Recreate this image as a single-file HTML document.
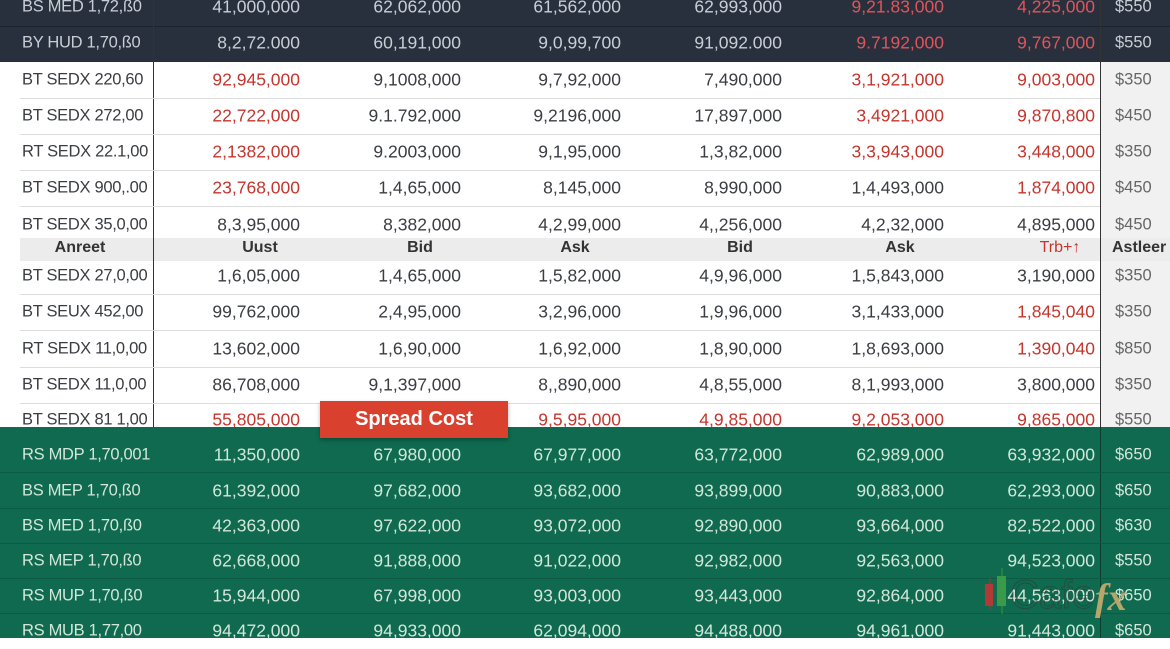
<!DOCTYPE html>
<html><head><meta charset="utf-8"><style>
*{margin:0;padding:0;box-sizing:border-box}
body{width:1170px;height:638px;overflow:hidden;background:#fff;font-family:"Liberation Sans",sans-serif;position:relative}
.band{position:absolute;left:0;width:1170px}
.r{position:absolute;left:0;width:1170px;height:36px;font-size:17.5px;color:#3a3d42}
.r span{position:absolute;top:50%;transform:translateY(-50%);white-space:nowrap;text-align:right}
.r .l{left:22px;width:126px;text-align:left;font-size:16.5px;letter-spacing:-0.3px}
.r .c1{right:870px}.r .c2{right:709px}.r .c3{right:549px}.r .c4{right:388px}.r .c5{right:226px}.r .c6{right:75px}
.r .c7{left:1115px;text-align:left;font-size:16.5px;color:#666}
.red{color:#c5352d!important}
.line{position:absolute;left:20px;width:1080px;height:1px;background:#dcdcdc}
.dk .r, .dk .r .c7{color:#c9ced6}.dk .red{color:#e2545a!important}
.gr{color:#d2e6da!important}
</style></head><body>
<div class="band" style="top:0;height:62px;background:#27303c"></div>
<div class="band" style="top:26px;height:1px;background:#1c232d"></div>
<div style="position:absolute;left:1100px;top:62px;width:70px;height:365px;background:#f1f1f1"></div>
<div style="position:absolute;left:20px;top:238px;width:1150px;height:23px;background:#ececec"></div>
<div style="position:absolute;left:153px;top:0;width:1px;height:427px;background:#333"></div>
<div style="position:absolute;left:1100px;top:0;width:1px;height:638px;background:#333"></div>

<div class="line" style="top:98px"></div><div class="line" style="top:134px"></div><div class="line" style="top:170px"></div><div class="line" style="top:206px"></div>
<div class="line" style="top:294px"></div><div class="line" style="top:330px"></div><div class="line" style="top:367px"></div><div class="line" style="top:403px"></div>

<div class="dk">
<div class="r" style="top:-11px"><span class="l">BS MED 1,72,ß0</span><span class="c1">41,000,000</span><span class="c2">62,062,000</span><span class="c3">61,562,000</span><span class="c4">62,993,000</span><span class="c5 red">9,21.83,000</span><span class="c6 red">4,225,000</span><span class="c7">$550</span></div>
<div class="r" style="top:25px"><span class="l">BY HUD 1,70,ß0</span><span class="c1">8,2,72.000</span><span class="c2">60,191,000</span><span class="c3">9,0,99,700</span><span class="c4">91,092.000</span><span class="c5 red">9.7192,000</span><span class="c6 red">9,767,000</span><span class="c7">$550</span></div>
</div>

<div class="r" style="top:62px"><span class="l">BT SEDX 220,60</span><span class="c1 red">92,945,000</span><span class="c2">9,1008,000</span><span class="c3">9,7,92,000</span><span class="c4">7,490,000</span><span class="c5 red">3,1,921,000</span><span class="c6 red">9,003,000</span><span class="c7">$350</span></div>
<div class="r" style="top:98px"><span class="l">BT SEDX 272,00</span><span class="c1 red">22,722,000</span><span class="c2">9.1.792,000</span><span class="c3">9,2196,000</span><span class="c4">17,897,000</span><span class="c5 red">3,4921,000</span><span class="c6 red">9,870,800</span><span class="c7">$450</span></div>
<div class="r" style="top:134px"><span class="l">RT SEDX 22.1,00</span><span class="c1 red">2,1382,000</span><span class="c2">9.2003,000</span><span class="c3">9,1,95,000</span><span class="c4">1,3,82,000</span><span class="c5 red">3,3,943,000</span><span class="c6 red">3,448,000</span><span class="c7">$350</span></div>
<div class="r" style="top:170px"><span class="l">BT SEDX 900,.00</span><span class="c1 red">23,768,000</span><span class="c2">1,4,65,000</span><span class="c3">8,145,000</span><span class="c4">8,990,000</span><span class="c5">1,4,493,000</span><span class="c6 red">1,874,000</span><span class="c7">$450</span></div>
<div class="r" style="top:207px"><span class="l">BT SEDX 35,0,00</span><span class="c1">8,3,95,000</span><span class="c2">8,382,000</span><span class="c3">4,2,99,000</span><span class="c4">4,,256,000</span><span class="c5">4,2,32,000</span><span class="c6">4,895,000</span><span class="c7">$450</span></div>
<div class="r" style="top:230px;font-weight:bold;font-size:16px;color:#333"><span style="left:30px;width:100px;text-align:center">Anreet</span><span style="left:210px;width:100px;text-align:center">Uust</span><span style="left:370px;width:100px;text-align:center">Bid</span><span style="left:525px;width:100px;text-align:center">Ask</span><span style="left:690px;width:100px;text-align:center">Bid</span><span style="left:850px;width:100px;text-align:center">Ask</span><span class="red" style="left:1010px;width:100px;text-align:center;font-weight:normal">Trb+↑</span><span style="left:1112px;text-align:left">Astleer</span></div>
<div class="r" style="top:258px"><span class="l">BT SEDX 27,0,00</span><span class="c1">1,6,05,000</span><span class="c2">1,4,65,000</span><span class="c3">1,5,82,000</span><span class="c4">4,9,96,000</span><span class="c5">1,5,843,000</span><span class="c6">3,190,000</span><span class="c7">$350</span></div>
<div class="r" style="top:294px"><span class="l">BT SEUX 452,00</span><span class="c1">99,762,000</span><span class="c2">2,4,95,000</span><span class="c3">3,2,96,000</span><span class="c4">1,9,96,000</span><span class="c5">3,1,433,000</span><span class="c6 red">1,845,040</span><span class="c7">$350</span></div>
<div class="r" style="top:331px"><span class="l">RT SEDX 11,0,00</span><span class="c1">13,602,000</span><span class="c2">1,6,90,000</span><span class="c3">1,6,92,000</span><span class="c4">1,8,90,000</span><span class="c5">1,8,693,000</span><span class="c6 red">1,390,040</span><span class="c7">$850</span></div>
<div class="r" style="top:367px"><span class="l">BT SEDX 11,0,00</span><span class="c1">86,708,000</span><span class="c2">9,1,397,000</span><span class="c3">8,,890,000</span><span class="c4">4,8,55,000</span><span class="c5">8,1,993,000</span><span class="c6">3,800,000</span><span class="c7">$350</span></div>
<div class="r" style="top:402px"><span class="l">BT SEDX 81 1,00</span><span class="c1 red">55,805,000</span><span class="c2 red">9,5,85,000</span><span class="c3 red">9,5,95,000</span><span class="c4 red">4,9,85,000</span><span class="c5 red">9,2,053,000</span><span class="c6 red">9,865,000</span><span class="c7">$550</span></div>

<div class="band" style="top:427px;height:211px;background:#0f6a4f;left:0"></div>
<div style="position:absolute;left:1100px;top:427px;width:1px;height:211px;background:#0a3d2e"></div>
<div class="band" style="top:472px;height:1px;background:#0b5a42"></div><div class="band" style="top:508px;height:1px;background:#0b5a42"></div><div class="band" style="top:543px;height:1px;background:#0b5a42"></div><div class="band" style="top:578px;height:1px;background:#0b5a42"></div><div class="band" style="top:613px;height:1px;background:#0b5a42"></div>

<div class="r gr" style="top:437px"><span class="l gr">RS MDP 1,70,001</span><span class="c1 gr">11,350,000</span><span class="c2 gr">67,980,000</span><span class="c3 gr">67,977,000</span><span class="c4 gr">63,772,000</span><span class="c5 gr">62,989,000</span><span class="c6 gr">63,932,000</span><span class="c7 gr">$650</span></div>
<div class="r gr" style="top:473px"><span class="l gr">BS MEP 1,70,ß0</span><span class="c1 gr">61,392,000</span><span class="c2 gr">97,682,000</span><span class="c3 gr">93,682,000</span><span class="c4 gr">93,899,000</span><span class="c5 gr">90,883,000</span><span class="c6 gr">62,293,000</span><span class="c7 gr">$650</span></div>
<div class="r gr" style="top:508px"><span class="l gr">BS MED 1,70,ß0</span><span class="c1 gr">42,363,000</span><span class="c2 gr">97,622,000</span><span class="c3 gr">93,072,000</span><span class="c4 gr">92,890,000</span><span class="c5 gr">93,664,000</span><span class="c6 gr">82,522,000</span><span class="c7 gr">$630</span></div>
<div class="r gr" style="top:543px"><span class="l gr">RS MEP 1,70,ß0</span><span class="c1 gr">62,668,000</span><span class="c2 gr">91,888,000</span><span class="c3 gr">91,022,000</span><span class="c4 gr">92,982,000</span><span class="c5 gr">92,563,000</span><span class="c6 gr">94,523,000</span><span class="c7 gr">$550</span></div>
<div class="r gr" style="top:578px"><span class="l gr">RS MUP 1,70,ß0</span><span class="c1 gr">15,944,000</span><span class="c2 gr">67,998,000</span><span class="c3 gr">93,003,000</span><span class="c4 gr">93,443,000</span><span class="c5 gr">92,864,000</span><span class="c6 gr">44,563,000</span><span class="c7 gr">$650</span></div>
<div class="r gr" style="top:613px"><span class="l gr">RS MUB 1,77,00</span><span class="c1 gr">94,472,000</span><span class="c2 gr">94,933,000</span><span class="c3 gr">62,094,000</span><span class="c4 gr">94,488,000</span><span class="c5 gr">94,961,000</span><span class="c6 gr">91,443,000</span><span class="c7 gr">$650</span></div>

<div style="position:absolute;left:320px;top:401px;width:188px;height:37px;background:#d9402e;color:#fff;font-weight:bold;font-size:20px;text-align:center;line-height:37px;box-shadow:0 2px 4px rgba(0,0,0,.3)">Spread Cost</div>

<svg style="position:absolute;left:980px;top:568px" width="190" height="70">
<line x1="10" y1="10" x2="10" y2="42" stroke="#a33" stroke-width="1"/><rect x="5" y="16" width="8" height="22" fill="#b03a35"/>
<line x1="22" y1="0" x2="22" y2="46" stroke="#393" stroke-width="1"/><rect x="17" y="8" width="9" height="30" fill="#3a9a4a"/>
<text x="30" y="40" font-family="Liberation Sans" font-size="40" fill="none" stroke="#333" stroke-opacity=".5" stroke-width="1">Cafe</text>
<text x="115" y="42" font-family="Liberation Serif" font-style="italic" font-weight="bold" font-size="38" fill="#b8a56a">fx</text>
</svg>
</body></html>
